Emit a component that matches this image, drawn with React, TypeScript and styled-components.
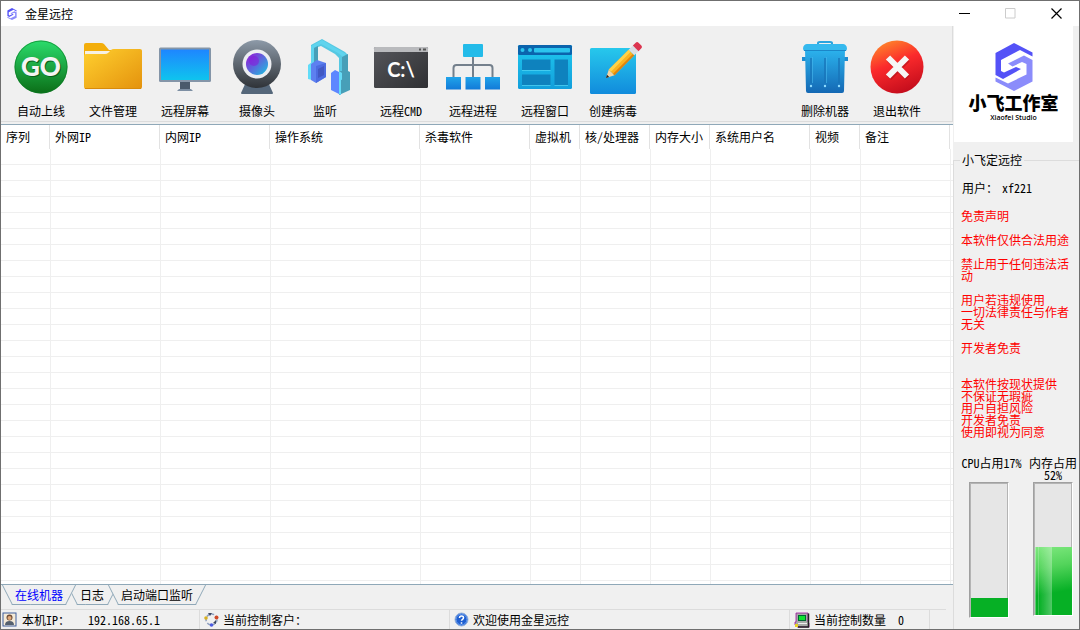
import React from "react";
import styled, { createGlobalStyle } from "styled-components";

const FACE = "#f0f0f0";
const LINE = "#dcdcdc";
const EDGE = "#8fa8b8";

const GlobalStyle = createGlobalStyle`
  *, *::before, *::after { box-sizing: border-box; }
  body {
    margin: 0;
    background: ${FACE};
    color: #000;
    font: 12px/16px "Noto Sans CJK SC", sans-serif;
    font-feature-settings: "hwid";
  }
  button { font: inherit; font-feature-settings: inherit; color: inherit; background: none; border: 0; padding: 0; }
`;

const Window = styled.div`
  display: flex;
  flex-direction: column;
  height: 100vh;
  min-height: 630px;
  border: 1px solid #6f6f6f;
`;

const TitleBar = styled.header`
  display: flex;
  align-items: center;
  height: 25px;
  flex: none;
  background: #fff;
  padding-left: 4px;
`;

const Title = styled.h1`
  flex: 1;
  margin: 0 0 0 6px;
  font-size: 12px;
  font-weight: 400;
`;

const WindowButton = styled.button`
  display: grid;
  place-items: center;
  width: 46px;
  height: 24px;
`;

const Content = styled.div`
  display: flex;
  flex: 1;
  min-height: 0;
`;

const Main = styled.main`
  display: flex;
  flex-direction: column;
  flex: 1;
  min-width: 0;
`;

const Toolbar = styled.div`
  display: flex;
  justify-content: space-between;
  flex: none;
  height: 96px;
  margin-bottom: 2px;
  padding: 9px 19px 0 4px;
  border-right: 1px solid ${LINE};
  border-bottom: 1px solid ${LINE};
`;

const ToolGroup = styled.div`
  display: flex;
`;

const ToolButton = styled.button`
  display: flex;
  flex-direction: column;
  align-items: center;
  gap: 4px;
  width: 72px;
  height: 84px;
`;

const ToolLabel = styled.span<{ $trail?: boolean }>`
  white-space: nowrap;
  padding-right: ${(p) => (p.$trail ? "8px" : "0")};
`;

const ListView = styled.div`
  flex: 1;
  min-height: 0;
  overflow: hidden;
  background: #fff;
  border-top: 1px solid ${EDGE};
  border-bottom: 1px solid ${EDGE};
`;

const Table = styled.table`
  width: 100%;
  table-layout: fixed;
  border-collapse: separate;
  border-spacing: 0;
`;

const HeadCell = styled.th`
  height: 24px;
  padding: 0 0 0 5px;
  font-weight: 400;
  text-align: left;
  white-space: nowrap;
  border-right: 1px solid #e2e2e2;
  &:last-child { border-right: 0; }
`;

const Cell = styled.td`
  height: 16px;
  padding: 0;
  border-left: 1px solid #efefef;
  border-bottom: 1px solid #efefef;
  &:first-child { border-left: 0; }
`;

const Tabs = styled.div`
  display: flex;
  flex: none;
  height: 24px;
  padding-left: 1px;
`;

const Tab = styled.button<{ $active?: boolean }>`
  position: relative;
  z-index: ${(p) => (p.$active ? 2 : 1)};
  height: 20px;
  padding: 0 13px;
  color: ${(p) => (p.$active ? "#00f" : "#000")};
  & + & { margin-left: -9px; }
  &::before, &::after {
    content: "";
    position: absolute;
    z-index: -1;
    top: 0;
    bottom: 0;
    background: ${FACE};
    border-bottom: 1px solid ${EDGE};
  }
  &::before { left: 5px; right: 45%; border-left: 1px solid ${EDGE}; transform: skewX(27deg); }
  &::after { right: 5px; left: 45%; border-right: 1px solid ${EDGE}; transform: skewX(-27deg); }
`;

const StatusBar = styled.footer`
  display: grid;
  grid-template-columns: 199px 250px 340px 140px;
  flex: none;
  height: 20px;
  margin-right: 7px;
  border-top: 1px solid ${LINE};
`;

const StatusCell = styled.div`
  display: flex;
  align-items: center;
  gap: 4px;
  padding-left: 4px;
  border-right: 1px solid ${LINE};
  white-space: pre;
  &:first-child { padding-left: 1px; }
`;

const StatusValue = styled.span<{ $wide?: boolean }>`
  margin-left: ${(p) => (p.$wide ? "14px" : "8px")};
`;

const Sidebar = styled.aside`
  display: flex;
  flex-direction: column;
  flex: none;
  width: 126px;
`;

const Brand = styled.div`
  display: flex;
  flex-direction: column;
  align-items: center;
  flex: none;
  height: 116px;
  margin: 0 6px 10px 1px;
  padding-top: 17px;
  background: #fff;
`;

const BrandName = styled.strong`
  font-size: 18px;
  line-height: 22px;
  font-weight: 900;
  white-space: nowrap;
`;

const BrandSub = styled.span`
  font: 600 7px/10px "Open Sans", sans-serif;
  font-feature-settings: normal;
`;

const Group = styled.fieldset`
  flex: 1;
  min-width: 0;
  margin: 0;
  padding: 0;
  border: solid ${LINE};
  border-width: 1px 0 0 1px;
`;

const Legend = styled.legend`
  margin-left: 6px;
  padding: 0 2px;
`;

const UserLine = styled.p`
  display: flex;
  gap: 4px;
  margin: 12px 0 0 8px;
`;

const Notice = styled.p`
  width: 110px;
  margin: 14px 0 19px 7px;
  color: #f00;
  line-height: 12px;
  white-space: pre-line;
`;

const Meters = styled.div`
  display: flex;
  gap: 7px;
  margin-left: 7px;
`;

const Meter = styled.div<{ $narrow?: boolean }>`
  display: flex;
  flex-direction: column;
  width: ${(p) => (p.$narrow ? "48px" : "61px")};
  padding-left: ${(p) => (p.$narrow ? "4px" : "8px")};
`;

const MeterLabel = styled.span<{ $narrow?: boolean }>`
  height: 25px;
  margin-left: ${(p) => (p.$narrow ? "-4px" : "-8px")};
  line-height: 12px;
  text-align: center;
`;

const Gauge = styled.div<{ $tall?: boolean }>`
  display: flex;
  align-items: flex-end;
  width: 40px;
  height: ${(p) => (p.$tall ? "136px" : "134px")};
  padding: 1px 0 0 1px;
  background: #e6e6e6;
  border: 1px solid;
  border-color: #a0a0a0 #fff #fff #a0a0a0;
  box-shadow: inset 1px 1px 0 #b4b4b4, inset -1px 0 0 #b4b4b4;
`;

const Fill = styled.div<{ $glossy?: boolean }>`
  width: 100%;
  background: ${(p) =>
    p.$glossy
      ? "linear-gradient(90deg, rgba(255,255,255,.35) 0 1px, transparent 1px 3px, rgba(255,255,255,.2) 3px 4px, transparent 4px, rgba(255,255,255,.3) 17px, transparent 17px), linear-gradient(170deg, #7ee87e, #53d45b 30%, #06b025 66%)"
      : "#06b025"};
`;

const Drawing = styled.svg`
  flex: none;
`;

const Svg = ({ children, s = 64 }: { children: React.ReactNode; s?: number }) => (
  <Drawing width={s} height={s} viewBox={`0 0 ${s} ${s}`} aria-hidden="true">
    {children}
  </Drawing>
);

const Grad = ({ id, a, b, x = 0 }: { id: string; a: string; b: string; x?: number }) => (
  <defs>
    <linearGradient id={id} x1="0" y1="0" x2={x} y2="1">
      <stop offset="0" stopColor={a} />
      <stop offset="1" stopColor={b} />
    </linearGradient>
  </defs>
);

const GoIcon = () => (
  <Svg>
    <Grad id="go" a="#2bdc6c" b="#0b6e17" />
    <circle cx="32" cy="32" r="26.5" fill="url(#go)" />
    <circle cx="32" cy="32" r="26" fill="none" stroke="#0a7a25" strokeOpacity=".6" />
    <g fontFamily="Lato, sans-serif" fontWeight="900" fontSize="26" textAnchor="middle">
      <text x="33" y="42" fill="#07601a">GO</text>
      <text x="32" y="41" fill="#f4f4f4">GO</text>
    </g>
  </Svg>
);

const FolderIcon = () => (
  <Svg>
    <Grad id="fo" a="#ffd02f" b="#e4920d" x={1} />
    <path d="M3 10q0-2 2-2h15q2 0 3 1l5 6h31q2 0 2 2v6H3z" fill="#f3ae0b" />
    <path d="M4 16h25v4H4z" fill="#f6f1e4" />
    <path d="M3 21q0-2 2-2h19q2 0 3-1l3-3q1-1 3-1h26q2 0 2 2v36q0 2-2 2H5q-2 0-2-2z" fill="url(#fo)" />
    <path d="M4 53.5h56" stroke="#d98b0a" />
  </Svg>
);

const MonitorIcon = () => (
  <Svg>
    <Grad id="mo" a="#1e86ff" b="#0fc4ee" />
    <path d="M27 47h10v8H27z" fill="#4a5a6c" />
    <path d="M26 54h12l2 2H24z" fill="#7d8fa3" />
    <rect x="6" y="12.500" width="52" height="34.500" rx="1.500" fill="#8495a8" />
    <rect x="8" y="14.500" width="48" height="30.500" fill="url(#mo)" />
  </Svg>
);

const WebcamIcon = () => (
  <Svg>
    <Grad id="wc" a="#8d9aa8" b="#2f3338" />
    <Grad id="le" a="#9a10d8" b="#18c6e0" x={1} />
    <path d="M21 47h22l5 11q0 1-1 1H17q-1 0-1-1z" fill="#55677a" />
    <circle cx="32" cy="29" r="24" fill="url(#wc)" />
    <circle cx="32" cy="29" r="14.500" fill="#eceef2" />
    <circle cx="32" cy="29" r="11" fill="url(#le)" />
    <circle cx="29" cy="26" r="5" fill="#8a12dc" opacity=".5" />
  </Svg>
);

const HeadphoneIcon = () => (
  <Svg>
    <path d="M14 29V10L25 4l23 13 3 3v17h-9V23l-4-4-14-8-3 1v16z" fill="#56c8e2" />
    <path d="M14 11l11-6 24 14-3 3-5-4-17-9-7 4v15h-3z" fill="#5fd4ee" />
    <path d="M17 13l4-2v17h-4zM45 22l6-3v18h-6z" fill="#479fb8" />
    <path d="M11 30l4-3v18l-4-1z" fill="#61dcf8" />
    <path d="M14 29l6-4 9 3v14l-10 6-5-3z" fill="#5d80f0" />
    <path d="M19 31l10-3v14l-10 6z" fill="#4c6be0" />
    <path d="M21 34l6-3v9l-6 3z" fill="#4158c4" />
    <path d="M34 38l4-3 6 3v22l-10-5z" fill="#5d87ff" />
    <path d="M42 36h9l2 1v18l-11 5z" fill="#479fb8" />
    <path d="M42 36l3 2v7l-3-1z" fill="#66dcf6" />
    <path d="M42 43l2 1v16l-2-1z" fill="#66dcf6" />
  </Svg>
);

const CmdIcon = () => (
  <Svg>
    <Grad id="cm" a="#55565b" b="#2f3033" x={1} />
    <rect x="5" y="12" width="54" height="41" rx="1.500" fill="url(#cm)" />
    <path d="M5 17v-3.500q0-1.500 1.500-1.500h51q1.500 0 1.500 1.500V17z" fill="#b9babd" />
    <path d="M50 14.500h2M54 14.500h3" stroke="#555" strokeWidth="2" />
    <text x="32" y="42" fill="#fff" textAnchor="middle" fontFamily="Lato, sans-serif" fontWeight="700" fontSize="20">C:\</text>
  </Svg>
);

const ProcessIcon = () => (
  <Svg>
    <Grad id="pr" a="#20a4ea" b="#127ad8" />
    <path d="M32 21v22M12.500 43V33q0-3 3-3h33q3 0 3 3v10" fill="none" stroke="#74808c" strokeWidth="2" />
    <rect x="22" y="9" width="20" height="13" rx="1" fill="#23bbe9" />
    <path d="M5 42h15v12.500H5zM24.500 42h15v12.500h-15zM44 42h15v12.500H44z" fill="url(#pr)" />
  </Svg>
);

const PanelsIcon = () => (
  <Svg>
    <Grad id="pa" a="#1fc8ee" b="#129fdc" />
    <rect x="5" y="10" width="54" height="44" rx="1.500" fill="url(#pa)" />
    <rect x="5" y="10" width="54" height="10" rx="1.500" fill="#0b64ad" />
    <circle cx="9.500" cy="15" r="2" fill="#2cc4ee" />
    <circle cx="17" cy="15" r="2" fill="#2cc4ee" />
    <rect x="21" y="13" width="36" height="4.500" rx="1" fill="#2cc4ee" />
    <path d="M9 24.500h28.500V35H9zM9 39.500h28.500V50H9zM41.500 24.500H55V50H41.500z" fill="#0e82be" />
    <path d="M9 35.500h28.500M9 50.500h28.500M41.500 50.500H55" stroke="#5fdcf7" strokeOpacity=".6" />
  </Svg>
);

const EditIcon = () => (
  <Svg>
    <Grad id="ed" a="#27c8ec" b="#118bdc" />
    <rect x="5" y="13" width="46" height="46" rx="1.500" fill="url(#ed)" />
    <g transform="rotate(-45 21 43)">
      <path d="M21 43l8-4v8z" fill="#f3d3a2" />
      <path d="M21 43l3-1.500v3z" fill="#222" />
      <path d="M29 39h28v8H29z" fill="#fbb320" />
      <path d="M29 39h28v3H29z" fill="#ffd24a" />
      <path d="M29 45h28v2H29z" fill="#dd8410" />
      <path d="M57 39h6v8h-6z" fill="#d9dee4" />
      <path d="M63 39h4q2 0 2 2v4q0 2-2 2h-4z" fill="#dc3550" />
    </g>
  </Svg>
);

const TrashIcon = () => (
  <Svg>
    <Grad id="tr" a="#2cb4ee" b="#1468b4" />
    <path d="M25 10V8q0-1 2-1h10q2 0 2 1v2" fill="none" stroke="#2ba4de" strokeWidth="2" />
    <path d="M9 22h5v4H9zM50 22h5v4h-5z" fill="#1f8cd0" />
    <path d="M12 14h40l-1 42q0 2-2 2H15q-2 0-2-2z" fill="url(#tr)" />
    <path d="M18 23v25M32 23v25M46 23v25" stroke="#1873b8" strokeWidth="2" strokeOpacity=".7" />
    <path d="M19.500 22v26M33.500 22v26" stroke="#48b8ec" strokeOpacity=".6" />
    <path d="M10 13q1-4 4-4h36q3 0 4 4 0 3-2 3H12q-2 0-2-3z" fill="#35b9ee" />
    <path d="M11 15.500h42" stroke="#1b86c8" />
    <circle cx="18" cy="51" r="1.200" fill="#8fdcff" />
    <circle cx="32" cy="51" r="1.200" fill="#8fdcff" />
    <circle cx="46" cy="51" r="1.200" fill="#8fdcff" />
  </Svg>
);

const ExitIcon = () => (
  <Svg>
    <defs>
      <linearGradient id="ex" x1=".2" y1="0" x2=".6" y2="1">
        <stop offset="0" stopColor="#ff8a2a" />
        <stop offset=".45" stopColor="#fb2a2c" />
        <stop offset="1" stopColor="#c40d1c" />
      </linearGradient>
    </defs>
    <circle cx="32" cy="32" r="26.500" fill="url(#ex)" />
    <path d="M24 24.500l18.500 18.500M42.500 24.500L24 43" stroke="#a80f18" strokeWidth="6" opacity=".5" />
    <path d="M23 22.500l19 19M42 22.500l-19 19" stroke="#f6f6f6" strokeWidth="6" />
  </Svg>
);

const LogoMark = ({ w, h }: { w: number; h: number }) => (
  <svg width={w} height={h} viewBox="0 0 38 48" aria-hidden="true">
    <path d="M19 0l18.500 9.500v4L25 7 6 17v11l3 1.500L21 24l5 2-18 10-7.500-4V10z" fill="#5452f7" />
    <path d="M13 20.500L29 12.500l8.500 4.500v21.500L19 48 .5 38.500v-4L13 40.500l18.500-9V21L27 19l-9.500 4.500z" fill="#8b8cfb" />
  </svg>
);

const UserIcon = () => (
  <Svg s={16}>
    <rect x="1" y="1" width="13" height="13" fill="#f4ead8" stroke="#3f5f9c" />
    <circle cx="7.500" cy="5.500" r="3" fill="#6b4a35" />
    <circle cx="7.500" cy="6" r="2" fill="#e0a878" />
    <path d="M3 13q0-4 4.500-4t4.500 4z" fill="#55606e" />
  </Svg>
);

const CycleIcon = () => (
  <Svg s={15}>
    <circle cx="7.500" cy="7.500" r="5.500" fill="none" stroke="#8fa0c0" strokeWidth="1.500" strokeDasharray="3 2" />
    <circle cx="2" cy="6" r="1.800" fill="#d8b020" />
    <circle cx="12.500" cy="5.500" r="2" fill="#d04a28" />
    <circle cx="7.500" cy="13" r="1.800" fill="#4a5ae0" />
    <path d="M4 1l4 0-2 3zM12 12l-3-1 3-3z" fill="#3a4660" />
  </Svg>
);

const HelpIcon = () => (
  <Svg s={15}>
    <circle cx="7.500" cy="7.500" r="6.500" fill="#1f5fd0" stroke="#9ab4d8" />
    <circle cx="7.500" cy="7.500" r="5.500" fill="none" stroke="#6fa0f0" />
    <path d="M5.500 6q0-2 2-2t2 1.700q0 1-1 1.600t-1 1.500M7.500 10.300v1.500" fill="none" stroke="#fff" strokeWidth="1.500" />
  </Svg>
);

const ComputerIcon = () => (
  <Svg s={16}>
    <path d="M2 1h12v9l1 1v4H3l-2-2V10h1z" fill="#a8a8a8" stroke="#a010a0" strokeWidth=".8" />
    <path d="M14.500 1.500V15H4" fill="none" stroke="#222" strokeWidth="1.500" />
    <rect x="4" y="3" width="8" height="6" fill="#063" />
    <rect x="5" y="4" width="6" height="4" fill="#10e030" />
    <path d="M4 11.500h9" stroke="#eee" />
    <path d="M1 12h3v3H1z" fill="#e8d020" />
  </Svg>
);

type Tool = { label: string; icon: React.ReactNode; trail?: boolean };

const tools: Tool[] = [
  { label: "自动上线", icon: <GoIcon /> },
  { label: "文件管理", icon: <FolderIcon /> },
  { label: "远程屏幕", icon: <MonitorIcon /> },
  { label: "摄像头", icon: <WebcamIcon /> },
  { label: "监听", icon: <HeadphoneIcon />, trail: true },
  { label: "远程CMD", icon: <CmdIcon /> },
  { label: "远程进程", icon: <ProcessIcon /> },
  { label: "远程窗口", icon: <PanelsIcon /> },
  { label: "创建病毒", icon: <EditIcon />, trail: true },
];

const endTools: Tool[] = [
  { label: "删除机器", icon: <TrashIcon /> },
  { label: "退出软件", icon: <ExitIcon /> },
];

const columns: [string, number?][] = [
  ["序列", 49],
  ["外网IP", 110],
  ["内网IP", 110],
  ["操作系统", 150],
  ["杀毒软件", 110],
  ["虚拟机", 50],
  ["核/处理器", 70],
  ["内存大小", 60],
  ["系统用户名", 100],
  ["视频", 50],
  ["备注", 90],
  [""],
];

const ROWS = 60;

const notice = `免责声明

本软件仅供合法用途

禁止用于任何违法活动

用户若违规使用
一切法律责任与作者无关

开发者免责


本软件按现状提供
不保证无瑕疵
用户自担风险
开发者免责
使用即视为同意`;

const ToolItems = ({ items }: { items: Tool[] }) => (
  <ToolGroup>
    {items.map((t) => (
      <ToolButton key={t.label} type="button">
        {t.icon}
        <ToolLabel $trail={t.trail}>{t.label}</ToolLabel>
      </ToolButton>
    ))}
  </ToolGroup>
);

export default function App() {
  return (
    <>
      <GlobalStyle />
      <Window>
        <TitleBar>
          <LogoMark w={14} h={12} />
          <Title>金星远控</Title>
          <WindowButton type="button" aria-label="最小化">
            <Svg s={11}><path d="M0 5.500h11" stroke="#000" /></Svg>
          </WindowButton>
          <WindowButton type="button" aria-label="最大化" disabled>
            <Svg s={11}><path d="M.5.5h9.500v9.500H.5z" fill="none" stroke="#ccc" /></Svg>
          </WindowButton>
          <WindowButton type="button" aria-label="关闭">
            <Svg s={11}><path d="M.5.5l10 10M10.500.5l-10 10" stroke="#000" strokeWidth="1.200" /></Svg>
          </WindowButton>
        </TitleBar>
        <Content>
          <Main>
            <Toolbar role="toolbar">
              <ToolItems items={tools} />
              <ToolItems items={endTools} />
            </Toolbar>
            <ListView>
              <Table>
                <colgroup>
                  {columns.map(([name, width]) => (
                    <col key={name} width={width} />
                  ))}
                </colgroup>
                <thead>
                  <tr>
                    {columns.map(([name]) => (
                      <HeadCell key={name} scope="col">{name}</HeadCell>
                    ))}
                  </tr>
                </thead>
                <tbody>
                  {Array.from({ length: ROWS }, (_, r) => (
                    <tr key={r}>
                      {columns.map(([name]) => (
                        <Cell key={name} />
                      ))}
                    </tr>
                  ))}
                </tbody>
              </Table>
            </ListView>
            <Tabs role="tablist">
              <Tab type="button" role="tab" aria-selected $active>在线机器</Tab>
              <Tab type="button" role="tab" aria-selected={false}>日志</Tab>
              <Tab type="button" role="tab" aria-selected={false}>启动端口监听</Tab>
            </Tabs>
            <StatusBar>
              <StatusCell>
                <UserIcon />
                <span>本机IP：</span>
                <StatusValue $wide>192.168.65.1</StatusValue>
              </StatusCell>
              <StatusCell>
                <CycleIcon />
                <span>当前控制客户：</span>
              </StatusCell>
              <StatusCell>
                <HelpIcon />
                <span>欢迎使用金星远控</span>
              </StatusCell>
              <StatusCell>
                <ComputerIcon />
                <span>当前控制数量</span>
                <StatusValue>0</StatusValue>
              </StatusCell>
            </StatusBar>
          </Main>
          <Sidebar>
            <Brand>
              <LogoMark w={38} h={48} />
              <BrandName>小飞工作室</BrandName>
              <BrandSub>Xiaofei Studio</BrandSub>
            </Brand>
            <Group>
              <Legend>小飞定远控</Legend>
              <UserLine>
                <span>用户：</span>
                <span>xf221</span>
              </UserLine>
              <Notice>{notice}</Notice>
              <Meters>
                <Meter>
                  <MeterLabel id="cpu">CPU占用17%</MeterLabel>
                  <Gauge $tall role="progressbar" aria-labelledby="cpu" aria-valuenow={17}>
                    <Fill style={{ height: "14%" }} />
                  </Gauge>
                </Meter>
                <Meter $narrow>
                  <MeterLabel $narrow id="mem">内存占用52%</MeterLabel>
                  <Gauge role="progressbar" aria-labelledby="mem" aria-valuenow={52}>
                    <Fill $glossy style={{ height: "52%" }} />
                  </Gauge>
                </Meter>
              </Meters>
            </Group>
          </Sidebar>
        </Content>
      </Window>
    </>
  );
}
